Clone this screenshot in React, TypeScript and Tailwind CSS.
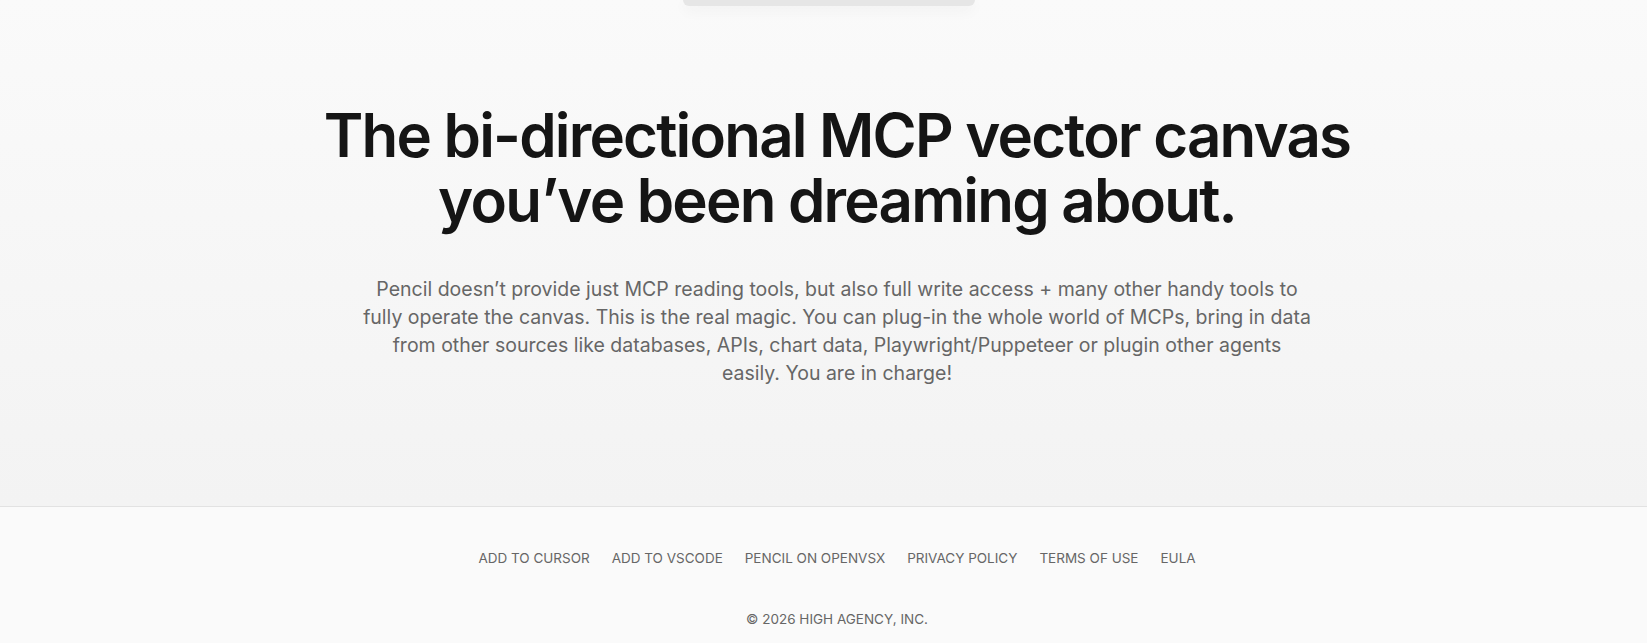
import React from 'react'

const links = ['Add to Cursor', 'Add to VSCode', 'Pencil on OpenVSX', 'Privacy Policy', 'Terms of Use', 'EULA']

export default function App() {
  return (
    <div className="min-h-screen bg-[#fafafa] font-['Inter',sans-serif]">
      {/* hero */}
      <section className="h-[507px] bg-gradient-to-b from-[#fafafa] to-[#f3f3f3] border-b border-[#e2e2e2] flex flex-col items-center">
        {/* tail of the preview window above */}
        <div className="ml-[11px] w-[292px] h-[6px] bg-[#e6e6e6] rounded-b-[16px] shadow-[0_4px_14px_rgba(0,0,0,0.06)]" />

        <div className="pl-[27px] flex flex-col items-center">
          <h2 className="mt-[97px] text-center text-[60px] leading-[65px] font-semibold tracking-[-0.03em] text-[#151515]">
            The bi-directional MCP vector canvas
            <br />
            you’ve been dreaming about.
          </h2>

          <p className="mt-[42px] text-center text-[19.5px] leading-[28px] text-[#666666]">
            Pencil doesn’t provide just MCP reading tools, but also full write access + many other handy tools to
            <br />
            fully operate the canvas. This is the real magic. You can plug-in the whole world of MCPs, bring in data
            <br />
            from other sources like databases, APIs, chart data, Playwright/Puppeteer or plugin other agents
            <br />
            easily. You are in charge!
          </p>
        </div>
      </section>

      <footer className="pl-[27px] flex flex-col items-center pt-[41px] pb-[14px]">
        <nav className="flex items-center gap-[22px]">
          {links.map((l) => (
            <a key={l} href="#" className="text-[13.5px] leading-[20px] uppercase text-[#666666]">
              {l}
            </a>
          ))}
        </nav>
        <p className="mt-[41px] text-[13.5px] leading-[20px] uppercase text-[#666666]">© 2026 High Agency, Inc.</p>
      </footer>
    </div>
  )
}
